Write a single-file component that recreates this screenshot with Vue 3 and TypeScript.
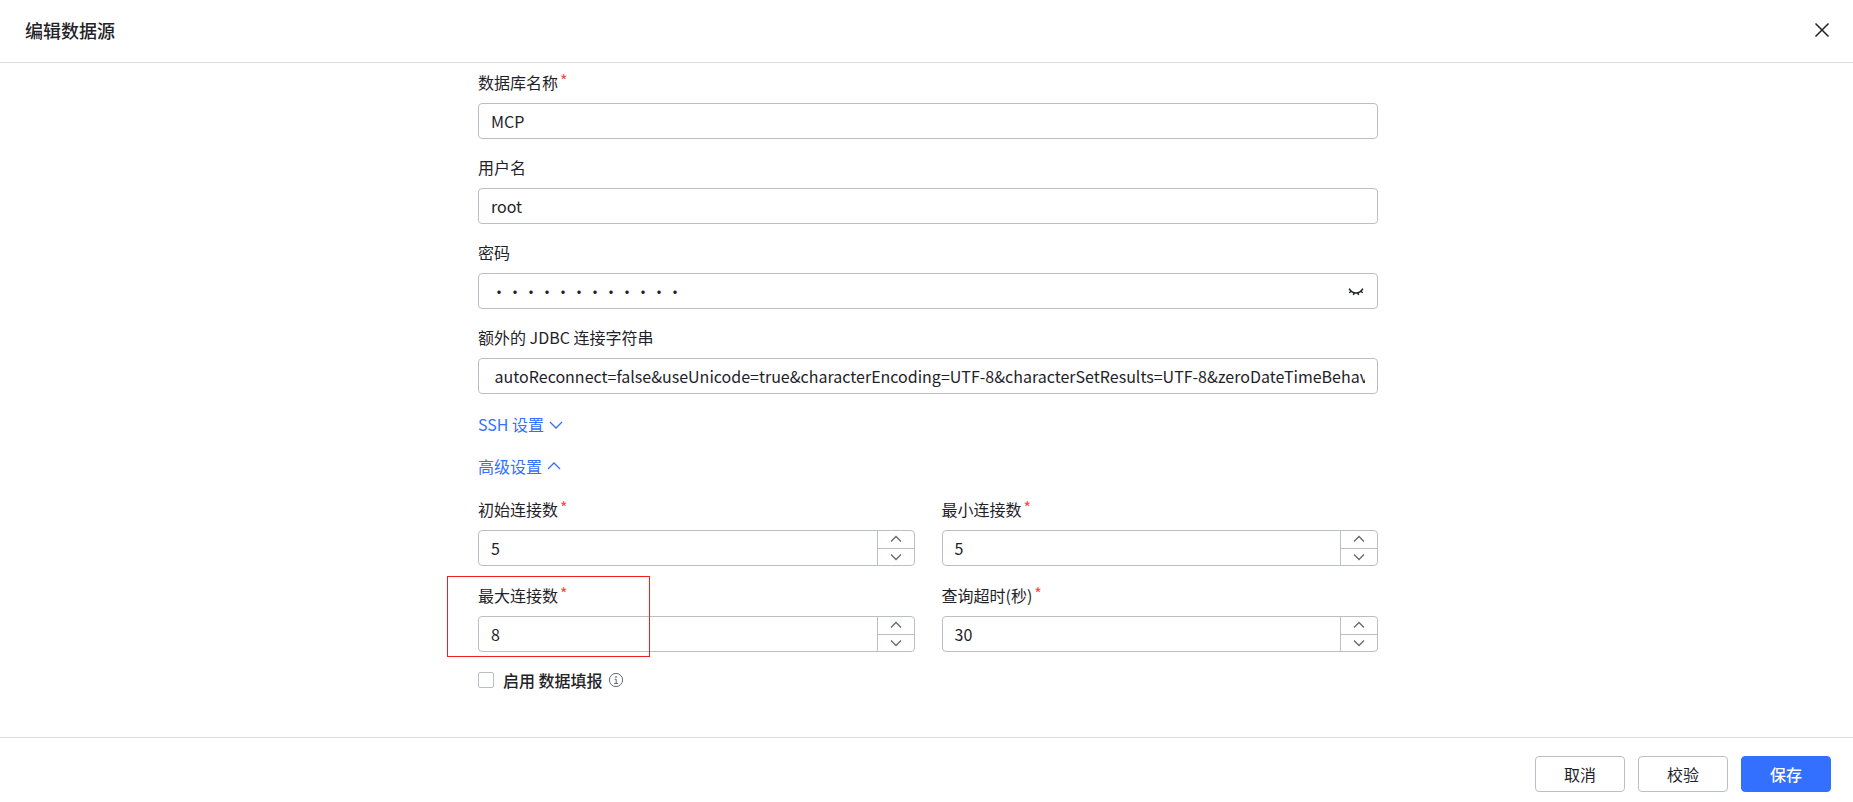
<script setup lang="ts">
import { ref } from 'vue'

interface NumberField {
  id: string
  label: string
  value: number
  marked?: boolean
}

const database = ref('MCP')
const username = ref('root')
const password = ref('Password1234')
const showPassword = ref(false)
const extraParams = ref(
  ' autoReconnect=false&useUnicode=true&characterEncoding=UTF-8&characterSetResults=UTF-8&zeroDateTimeBehavior=convertToNull&useSSL=false',
)
const sshOpen = ref(false)
const advancedOpen = ref(true)
const enableFilling = ref(false)

const numbers = ref<NumberField[]>([
  { id: 'initial', label: '初始连接数', value: 5 },
  { id: 'minimum', label: '最小连接数', value: 5 },
  { id: 'maximum', label: '最大连接数', value: 8, marked: true },
  { id: 'timeout', label: '查询超时(秒)', value: 30 },
])

function step(field: NumberField, delta: number) {
  field.value = Math.max(0, field.value + delta)
}
</script>

<template>
  <div class="drawer">
    <header class="header">
      <h1 class="title">编辑数据源</h1>
      <button class="icon-button" type="button" aria-label="关闭">
        <svg width="16" height="16" viewBox="0 0 16 16">
          <path d="M1.5 1.5 14.5 14.5M14.5 1.5 1.5 14.5" />
        </svg>
      </button>
    </header>

    <main class="body">
      <form id="source-form" class="form" @submit.prevent>
        <div class="field">
          <label class="label" for="database">数据库名称<span class="required">*</span></label>
          <input id="database" v-model="database" class="input" type="text" />
        </div>
        <div class="field">
          <label class="label" for="username">用户名</label>
          <input id="username" v-model="username" class="input" type="text" autocomplete="off" />
        </div>
        <div class="field">
          <label class="label" for="password">密码</label>
          <div class="input-group">
            <input
              id="password"
              v-model="password"
              class="bare-input"
              :type="showPassword ? 'text' : 'password'"
              autocomplete="off"
            />
            <button
              class="icon-button eye"
              type="button"
              aria-label="显示密码"
              @click="showPassword = !showPassword"
            >
              <svg width="16" height="16" viewBox="0 0 16 16">
                <path d="M1.200 5.600C2.800 8.600 5.200 10 8 10s5.200-1.400 6.800-4.400M3.200 8.200 1.300 9.800M6 9.700 5.400 12M10 9.700l.6 2.300M12.800 8.200l1.900 1.600" />
              </svg>
            </button>
          </div>
        </div>
        <div class="field">
          <label class="label" for="extra">额外的 JDBC 连接字符串</label>
          <input id="extra" v-model="extraParams" class="input" type="text" />
        </div>

        <button class="toggle" type="button" :aria-expanded="sshOpen" @click="sshOpen = !sshOpen">
          SSH 设置
          <svg :class="{ flipped: sshOpen }" width="14" height="16" viewBox="0 0 14 16">
            <path d="M1 6 7 12 13 6" />
          </svg>
        </button>
        <button
          class="toggle"
          type="button"
          :aria-expanded="advancedOpen"
          @click="advancedOpen = !advancedOpen"
        >
          高级设置
          <svg :class="{ flipped: advancedOpen }" width="14" height="16" viewBox="0 0 14 16">
            <path d="M1 5 7 11 13 5" />
          </svg>
        </button>

        <div v-if="advancedOpen" class="grid">
          <div v-for="item in numbers" :key="item.id" class="cell">
            <label class="label" :for="item.id">{{ item.label }}<span class="required">*</span></label>
            <div class="input-group">
              <input :id="item.id" v-model.number="item.value" class="bare-input" type="number" />
              <div class="stepper">
                <button type="button" aria-label="增加" @click="step(item, 1)">
                  <svg width="12" height="8" viewBox="0 0 12 8"><path d="M1 6.500 6 1.500 11 6.500" /></svg>
                </button>
                <button type="button" aria-label="减少" @click="step(item, -1)">
                  <svg width="12" height="8" viewBox="0 0 12 8"><path d="M1 1.500 6 6.500 11 1.500" /></svg>
                </button>
              </div>
            </div>
            <div v-if="item.marked" class="marker"></div>
          </div>
        </div>

        <div class="check-row">
          <input id="filling" v-model="enableFilling" class="checkbox" type="checkbox" />
          <label class="check-label" for="filling">启用 数据填报</label>
          <svg class="info" width="16" height="16" viewBox="0 0 16 16">
            <circle cx="8" cy="8" r="6.600" />
            <path d="M6.600 7.200H8.200V11.400M6.200 11.500H10" />
            <circle class="dot" cx="8" cy="4.800" r=".9" />
          </svg>
        </div>
      </form>
    </main>

    <footer class="footer">
      <button class="button" type="button">取消</button>
      <button class="button" type="button">校验</button>
      <button class="button primary" type="submit" form="source-form">保存</button>
    </footer>
  </div>
</template>

<style>
body {
  margin: 0;
}
</style>

<style scoped>
.drawer,
.drawer * {
  box-sizing: border-box;
}

.drawer {
  display: flex;
  flex-direction: column;
  min-height: 100vh;
  background: #fff;
  color: #1f2329;
  font-family: 'Noto Sans CJK SC', 'Noto Sans', sans-serif;
  font-size: 16px;
  line-height: 24px;
}

button,
input {
  margin: 0;
  font: inherit;
  color: inherit;
}

svg {
  display: block;
  flex: none;
  fill: none;
  stroke: currentColor;
}

.header {
  display: flex;
  align-items: center;
  justify-content: space-between;
  height: 63px;
  padding: 0 23px 2px 25px;
  border-bottom: 1px solid #dcdee0;
}

.title {
  margin: 0;
  font-size: 18px;
  font-weight: 500;
}

.icon-button {
  padding: 0;
  border: 0;
  background: none;
  cursor: pointer;
}

.header svg {
  stroke-width: 1.5;
}

.body {
  flex: 1;
  padding: 7px 0 24px 3px;
}

.form {
  max-width: 900px;
  margin: 0 auto;
}

.field {
  margin-bottom: 16px;
}

.label {
  display: block;
  width: fit-content;
  height: 24px;
  margin-bottom: 9px;
}

.required {
  margin-left: 2px;
  color: #f54a45;
  line-height: 16px;
  vertical-align: 2px;
}

.input,
.input-group {
  display: flex;
  width: 100%;
  height: 36px;
  border: 1px solid #bbbfc4;
  border-radius: 4px;
  background: #fff;
}

.input {
  padding: 0 12px;
}

.bare-input {
  flex: 1;
  min-width: 0;
  padding: 0 12px;
  border: 0;
  background: none;
  appearance: textfield;
}

.bare-input::-webkit-inner-spin-button {
  appearance: none;
}

.input,
.bare-input {
  outline: none;
}

.eye {
  padding-right: 13px;
}

.eye svg {
  stroke-width: 1.5;
}

.toggle {
  display: flex;
  align-items: center;
  gap: 5px;
  margin: 18px 0;
  padding: 0;
  border: 0;
  background: none;
  color: #3370ff;
  cursor: pointer;
}

.toggle svg {
  stroke-width: 1.3;
}

.flipped {
  transform: rotate(180deg);
}

.grid {
  display: grid;
  grid-template-columns: 1fr 1fr;
  gap: 17px 27px;
  margin-top: 19px;
}

.cell {
  position: relative;
}

.stepper {
  display: flex;
  flex-direction: column;
  width: 37px;
  border-left: 1px solid #bbbfc4;
}

.stepper button {
  display: flex;
  flex: 1;
  align-items: center;
  justify-content: center;
  padding: 0;
  border: 0;
  background: none;
  color: #646a73;
}

.stepper svg {
  stroke-width: 1.3;
}

.stepper button + button {
  border-top: 1px solid #bbbfc4;
}

.marker {
  position: absolute;
  top: -7px;
  left: -31px;
  width: 203px;
  height: 81px;
  border: 1px solid #f02020;
  pointer-events: none;
}

.check-row {
  display: flex;
  align-items: center;
  margin-top: 16px;
}

.checkbox {
  width: 16px;
  height: 16px;
  border: 1px solid #bbbfc4;
  border-radius: 2px;
  background: #fff;
  appearance: none;
}

.checkbox:checked {
  border-color: #3370ff;
  background: #3370ff;
}

.check-label {
  margin: 0 5px 0 9px;
  font-weight: 500;
}

.info {
  color: #646a73;
}

.info .dot {
  fill: currentColor;
  stroke: none;
}

.footer {
  display: flex;
  justify-content: flex-end;
  gap: 13px;
  padding: 18px 22px 10px;
  border-top: 1px solid #dcdee0;
}

.button {
  width: 90px;
  height: 36px;
  padding: 0;
  border: 1px solid #bbbfc4;
  border-radius: 4px;
  background: #fff;
  cursor: pointer;
}

.primary {
  border-color: #3370ff;
  background: #3370ff;
  color: #fff;
  font-weight: 500;
}
</style>
